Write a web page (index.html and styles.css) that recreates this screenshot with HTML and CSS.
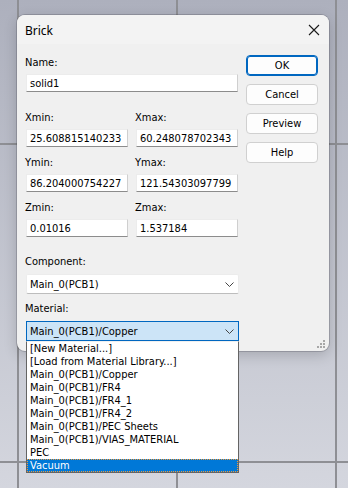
FILE: index.html
```html
<!DOCTYPE html>
<html>
<head>
<meta charset="utf-8">
<link rel="stylesheet" href="styles.css">
</head>
<body>
<div class="dialog">
  <div class="titlebar">
    <span class="title">Brick</span>
    <span class="close"><svg width="12" height="12" viewBox="0 0 12 12"><path d="M1 1L11 11M11 1L1 11" stroke="#1a1a1a" stroke-width="1.1" fill="none"/></svg></span>
  </div>
  <div class="content">
    <div class="form">
      <div class="lbl">Name:</div>
      <div class="field wide">solid1</div>
      <div class="grid">
        <div class="cell"><div class="lbl">Xmin:</div><div class="field">25.608815140233</div></div>
        <div class="cell"><div class="lbl">Xmax:</div><div class="field">60.248078702343</div></div>
        <div class="cell"><div class="lbl">Ymin:</div><div class="field">86.204000754227</div></div>
        <div class="cell"><div class="lbl">Ymax:</div><div class="field">121.54303097799</div></div>
        <div class="cell"><div class="lbl">Zmin:</div><div class="field">0.01016</div></div>
        <div class="cell"><div class="lbl">Zmax:</div><div class="field">1.537184</div></div>
      </div>
      <div class="lbl comp">Component:</div>
      <div class="select">
        <span>Main_0(PCB1)</span>
        <svg class="chev" width="9" height="5" viewBox="0 0 9 5"><path d="M0.5 0.5L4.5 4.5L8.5 0.5" stroke="#444" stroke-width="1" fill="none"/></svg>
      </div>
      <div class="lbl mat">Material:</div>
      <div class="combo">
        <div class="select open">
          <span>Main_0(PCB1)/Copper</span>
          <svg class="chev" width="9" height="5" viewBox="0 0 9 5"><path d="M0.5 0.5L4.5 4.5L8.5 0.5" stroke="#444" stroke-width="1" fill="none"/></svg>
        </div>
        <ul class="list">
          <li>[New Material...]</li>
          <li>[Load from Material Library...]</li>
          <li>Main_0(PCB1)/Copper</li>
          <li>Main_0(PCB1)/FR4</li>
          <li>Main_0(PCB1)/FR4_1</li>
          <li>Main_0(PCB1)/FR4_2</li>
          <li>Main_0(PCB1)/PEC Sheets</li>
          <li>Main_0(PCB1)/VIAS_MATERIAL</li>
          <li>PEC</li>
          <li class="sel">Vacuum</li>
        </ul>
      </div>
    </div>
    <div class="buttons">
      <div class="btn default">OK</div>
      <div class="btn">Cancel</div>
      <div class="btn">Preview</div>
      <div class="btn">Help</div>
    </div>
  </div>
  <svg class="grip" width="8" height="8" viewBox="0 0 8 8"><g fill="#a7a7a7"><rect x="6" y="0" width="2" height="2"/><rect x="3" y="3" width="2" height="2"/><rect x="6" y="3" width="2" height="2"/><rect x="0" y="6" width="2" height="2"/><rect x="3" y="6" width="2" height="2"/><rect x="6" y="6" width="2" height="2"/></g></svg>
</div>
</body>
</html>
```

FILE: styles.css
```css
* { box-sizing: border-box; }
html, body { margin: 0; padding: 0; }
body {
  width: 348px;
  height: 488px;
  overflow: hidden;
  font-family: "DejaVu Sans Condensed", "DejaVu Sans", sans-serif;
  font-stretch: condensed;
  font-size: 11px;
  color: #000;
  padding: 15px 0 0 17px;
  background-color: #c0c2cc;
  background-image:
    repeating-linear-gradient(to right, transparent 0 17px, #8e8f94 17px 19px, transparent 19px 159px),
    linear-gradient(to bottom, transparent 143px, #8e8f94 143px 145px, transparent 145px 461px, #8e8f94 461px 463px, transparent 463px),
    linear-gradient(to bottom, #adb0bd, #d4d6de);
}
.dialog {
  position: relative;
  width: 312px;
  height: 336px;
  background: #f0f0f0;
  border-radius: 8px;
  box-shadow: 0 0 0 1px rgba(60,60,70,0.25), 0 4px 14px rgba(0,0,0,0.18);
}
.titlebar {
  height: 29px;
  display: flex;
  align-items: center;
  justify-content: space-between;
  padding: 0 9px 0 8px;
  background: #f3f3f3;
  border-radius: 8px 8px 0 0;
}
.title {
  font-family: "Noto Sans", "Open Sans", sans-serif;
  font-stretch: normal;
  font-size: 12px;
  line-height: 15px;
  padding-top: 1px;
}
.close { display: flex; width: 12px; height: 12px; }
.content {
  display: flex;
  padding: 11px 0 0 8px;
}
.form { width: 214px; }
.lbl { height: 15px; line-height: 15px; margin-bottom: 4px; white-space: nowrap; }
.field {
  margin-left: 1px;
  height: 18px;
  line-height: 17px;
  padding-left: 3px;
  background: #fff;
  border: 1px solid #ececec;
  border-right-color: #cfcfcf;
  border-bottom-color: #8c8c8c;
  white-space: nowrap;
  overflow: hidden;
}
.field.wide { width: 212px; }
.grid {
  margin-top: 18px;
  display: grid;
  grid-template-columns: 103px 103px;
  column-gap: 7px;
  row-gap: 8px;
}
.grid .field { width: 102px; }
.comp { margin-top: 17px; margin-bottom: 5px; }
.mat { margin-top: 7px; margin-bottom: 5px; }
.select {
  margin-left: 1px;
  width: 213px;
  height: 20px;
  display: flex;
  align-items: center;
  justify-content: space-between;
  padding: 0 4px 0 3px;
  background: #fff;
  border: 1px solid #ececec;
  border-bottom-color: #bdbdbd;
  border-radius: 2px;
}
.select.open {
  background: #cce4f7;
  border: 1px solid #0067c0;
  border-radius: 0;
}
.chev { display: block; }
.combo { position: relative; }
.list {
  position: absolute;
  left: 1px;
  top: 20px;
  width: 213px;
  margin: 0;
  padding: 0;
  list-style: none;
  background: #fff;
  border: 1px solid #646464;
  border-top: 1px solid #f0f0f0;
  z-index: 2;
}
.list li {
  height: 13px;
  line-height: 13px;
  padding-left: 3px;
  white-space: nowrap;
}
.list li.sel {
  background: #0078d7;
  color: #fff;
  outline: 1px dotted #f09a3a;
  outline-offset: -1px;
}
.buttons {
  margin-left: 7px;
  display: flex;
  flex-direction: column;
  gap: 8px;
}
.btn {
  width: 72px;
  height: 21px;
  line-height: 19px;
  text-align: center;
  background: #fdfdfd;
  border: 1px solid #d0d0d0;
  border-radius: 4px;
}
.btn.default {
  border: 1px solid #0067c0;
  box-shadow: inset 0 0 0 1px #0067c0;
}
.grip { position: absolute; right: 4px; bottom: 3px; }
```
